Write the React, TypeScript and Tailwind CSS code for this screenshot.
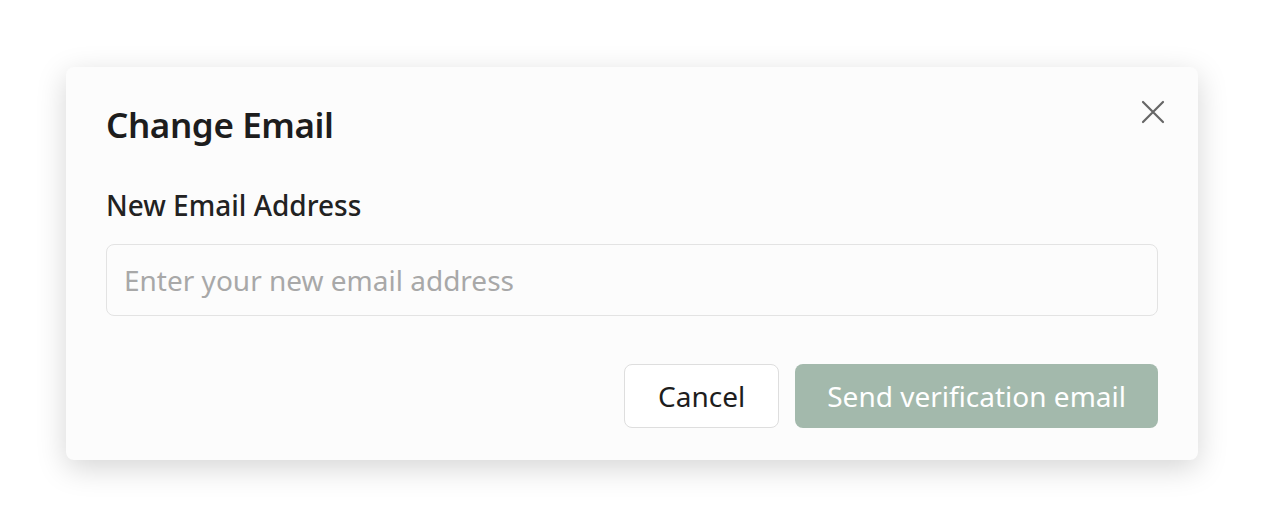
import React, { useState } from 'react';

function CloseIcon() {
  return (
    <svg width="24" height="24" viewBox="0 0 24 24" fill="none" stroke="currentColor" strokeWidth="2.2" strokeLinecap="round">
      <path d="M2 2L22 22M22 2L2 22" />
    </svg>
  );
}

export default function App() {
  const [email, setEmail] = useState('');

  return (
    <div className="h-[527px] w-full bg-white flex items-center justify-center font-['Noto_Sans',sans-serif]">
      <div className="relative w-[1132px] bg-[#fcfcfc] rounded-lg shadow-[0_8px_30px_rgba(0,0,0,0.17)] px-10 pt-[36px] pb-8">
        <button className="absolute right-[33px] top-[33px] text-[#666666]" aria-label="Close">
          <CloseIcon />
        </button>

        <h2 className="text-[35px] leading-[44px] font-semibold tracking-[-0.4px] text-[#1d1d1d]">Change Email</h2>

        <label className="block mt-10 text-[28px] leading-[36px] font-medium text-[#222222]">
          New Email Address
        </label>
        <input
          type="email"
          value={email}
          onChange={(e) => setEmail(e.target.value)}
          placeholder="Enter your new email address"
          className="mt-[21px] w-full h-[72px] rounded-lg border border-[#e3e3e3] bg-[#fcfcfc] px-[17px] text-[28px] text-[#222222] placeholder-[#a8a8a8] outline-none"
        />

        <div className="mt-12 flex justify-end gap-4">
          <button className="h-16 px-[33px] rounded-lg border border-[#dedede] bg-white text-[28px] text-[#1d1d1d]">
            Cancel
          </button>
          <button
            disabled={!email}
            className="h-16 px-8 rounded-lg bg-[#a3b9ac] text-[28px] text-white"
          >
            Send verification email
          </button>
        </div>
      </div>
    </div>
  );
}
